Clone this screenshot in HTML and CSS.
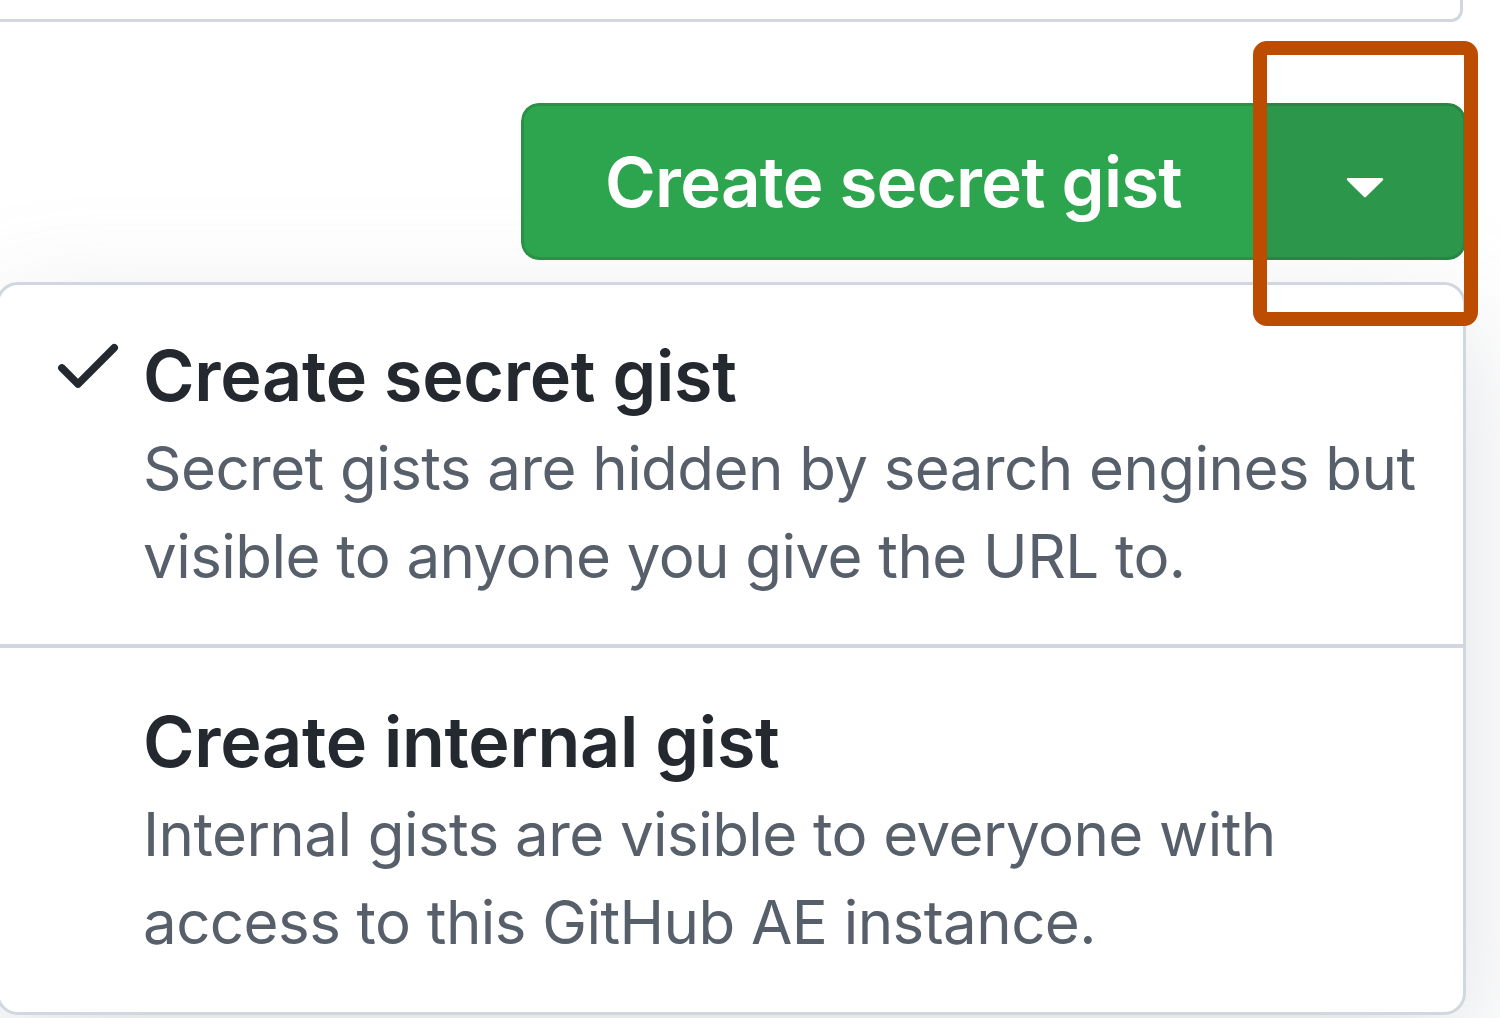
FILE: index.html
```html
<!DOCTYPE html>
<html lang="en">
<head>
<meta charset="utf-8">
<title>Create secret gist</title>
<link rel="stylesheet" href="styles.css">
</head>
<body>
<div class="topbox"></div>
<div class="actions">
  <div class="split-btn">
    <button class="btn-main" type="button">Create secret gist</button>
    <button class="btn-caret" type="button" aria-label="More options">
      <svg viewBox="0 0 16 16" width="80" height="80" aria-hidden="true"><path fill="#ffffff" d="m4.427 7.427 3.396 3.396a.25.25 0 0 0 .354 0l3.396-3.396A.25.25 0 0 0 11.396 7H4.604a.25.25 0 0 0-.177.427Z"/></svg>
    </button>
  </div>
</div>
<div class="menu">
  <div class="item">
    <span class="icon">
      <svg viewBox="0 0 16 16" width="80" height="80" aria-hidden="true"><path fill="#24292f" d="M13.78 4.22a.75.75 0 0 1 0 1.060l-7.25 7.25a.75.75 0 0 1-1.06 0L2.220 9.28a.751.751 0 0 1 .018-1.042.751.751 0 0 1 1.042-.018L6 10.94l6.72-6.72a.75.75 0 0 1 1.06 0Z"/></svg>
    </span>
    <div class="text">
      <div class="title">Create secret gist</div>
      <div class="desc">Secret gists are hidden by search engines but visible to anyone you give the URL to.</div>
    </div>
  </div>
  <div class="item">
    <span class="icon"></span>
    <div class="text">
      <div class="title">Create internal gist</div>
      <div class="desc">Internal gists are visible to everyone with access to this GitHub AE instance.</div>
    </div>
  </div>
</div>
<div class="highlight"></div>
</body>
</html>
```
FILE: styles.css
```css
html, body {
  margin: 0;
  padding: 0;
  background: #ffffff;
  overflow: hidden;
  width: 1500px;
  height: 1018px;
}
body {
  font-family: Inter, "Liberation Sans", Arial, sans-serif;
  position: relative;
}
.topbox {
  width: 1480px;
  margin-left: -20px;
  height: 19px;
  box-sizing: content-box;
  border-bottom: 3px solid #d0d7de;
  border-right: 3px solid #d0d7de;
  border-bottom-right-radius: 12px;
  background: #ffffff;
}
.actions {
  display: flex;
  justify-content: flex-end;
  padding-right: 34px;
  margin-top: 81px;
}
.split-btn {
  display: flex;
  width: 945px;
  height: 157px;
  border-radius: 18px;
  overflow: hidden;
}
.split-btn button {
  border: 0;
  margin: 0;
  padding: 0;
  font-family: inherit;
  color: #ffffff;
  display: flex;
  align-items: center;
  justify-content: center;
  cursor: pointer;
}
.btn-main {
  flex: 0 0 736px;
  background: #2da44e;
  font-size: 69px;
  font-weight: 600;
  letter-spacing: -0.75px;
  padding-left: 6px !important;
  border-top: 3px solid #2a9147 !important;
  border-bottom: 3px solid #2a9147 !important;
  border-left: 3px solid #2a9147 !important;
  border-radius: 18px 0 0 18px;
}
.btn-caret {
  flex: 1;
  background: #2c974b;
  border-top: 3px solid #2a8544 !important;
  border-bottom: 3px solid #2a8544 !important;
  border-right: 3px solid #2a8544 !important;
  border-radius: 0 18px 18px 0;
  padding-left: 10px !important;
}
.btn-caret svg { display: block; margin-top: 2px; }
.menu {
  margin-top: 22px;
  margin-left: -4px;
  width: 1464px;
  height: 727px;
  border: 3px solid #d0d7de;
  border-radius: 22px;
  background: #ffffff;
  box-shadow: 0 40px 120px rgba(140, 149, 159, 0.28);
}
.item {
  display: flex;
  align-items: flex-start;
  padding: 41px 40px 44px 49px;
}
.item + .item {
  border-top: 4px solid #d0d7de;
  padding-top: 44px;
}
.icon {
  flex: 0 0 80px;
  height: 80px;
  margin-right: 15px;
  margin-top: -2px;
}
.icon svg { display: block; }
.title {
  font-size: 70px;
  line-height: 100px;
  font-weight: 600;
  color: #24292f;
  letter-spacing: -0.3px;
}
.desc {
  margin-top: -2px;
  font-size: 60px;
  line-height: 88px;
  color: #57606a;
  letter-spacing: -0.55px;
  width: 1300px;
}
.highlight {
  position: absolute;
  left: 1253px;
  top: 41px;
  width: 197px;
  height: 257px;
  border: 14px solid #bc4c00;
  border-radius: 14px;
}
```
